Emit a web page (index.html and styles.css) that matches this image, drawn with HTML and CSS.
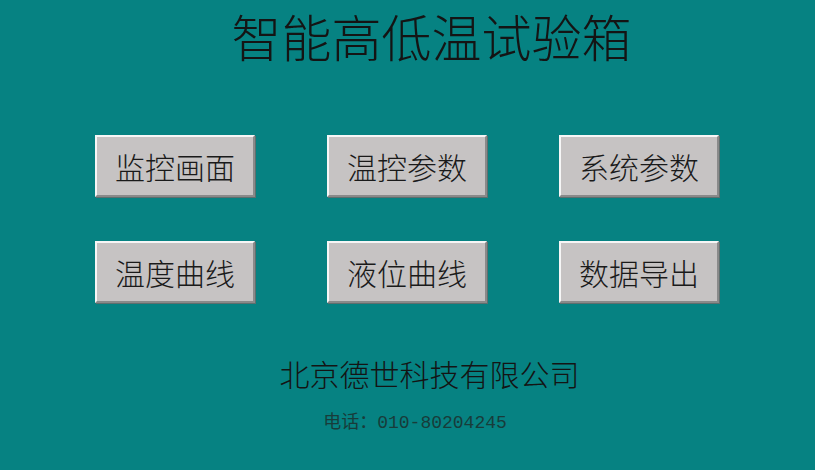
FILE: index.html
```html
<!DOCTYPE html>
<html lang="zh-CN">
<head>
<meta charset="utf-8">
<title>智能高低温试验箱</title>
<link rel="stylesheet" href="styles.css">
</head>
<body>
<div class="screen">
  <h1 class="title">智能高低温试验箱</h1>
  <div class="menu">
    <div class="btn">监控画面</div>
    <div class="btn">温控参数</div>
    <div class="btn">系统参数</div>
    <div class="btn">温度曲线</div>
    <div class="btn">液位曲线</div>
    <div class="btn">数据导出</div>
  </div>
  <div class="company">北京德世科技有限公司</div>
  <div class="phone">电话：<span class="num">010-80204245</span></div>
</div>
</body>
</html>
```
FILE: styles.css
```css
html, body {
  margin: 0;
  padding: 0;
  background: #068282;
}
.screen {
  width: 815px;
  height: 470px;
  overflow: hidden;
  display: flex;
  flex-direction: column;
  align-items: center;
  font-family: "Noto Sans CJK SC", "Noto Sans", sans-serif;
  color: #141414;
}
.title {
  margin: 0;
  padding: 6px 0 0 48px;
  font-size: 50px;
  line-height: 58px;
  font-weight: 300;
  letter-spacing: 0;
}
.menu {
  margin-top: 71px;
  margin-right: 1px;
  display: grid;
  grid-template-columns: repeat(3, 160px);
  column-gap: 72px;
  row-gap: 44px;
}
.btn {
  box-sizing: border-box;
  width: 160px;
  height: 62px;
  background: #c6c3c3;
  border: 2px solid;
  border-color: #f6f6f6 #8a8a8a #8a8a8a #f6f6f6;
  box-shadow: 1px 1px 0 #5e6e6e;
  display: flex;
  align-items: center;
  justify-content: center;
  font-size: 30px;
  font-weight: 300;
  line-height: 1;
  color: #1a1a1a;
}
.company {
  margin-top: 52px;
  padding-left: 44px;
  font-size: 30px;
  line-height: 36px;
  font-weight: 300;
  color: #141414;
}
.phone {
  margin-top: 17px;
  padding-left: 15px;
  font-size: 18px;
  line-height: 24px;
  font-weight: 400;
  color: #183c3a;
}
.num {
  font-family: "Liberation Mono", monospace;
  font-size: 18px;
}
```
